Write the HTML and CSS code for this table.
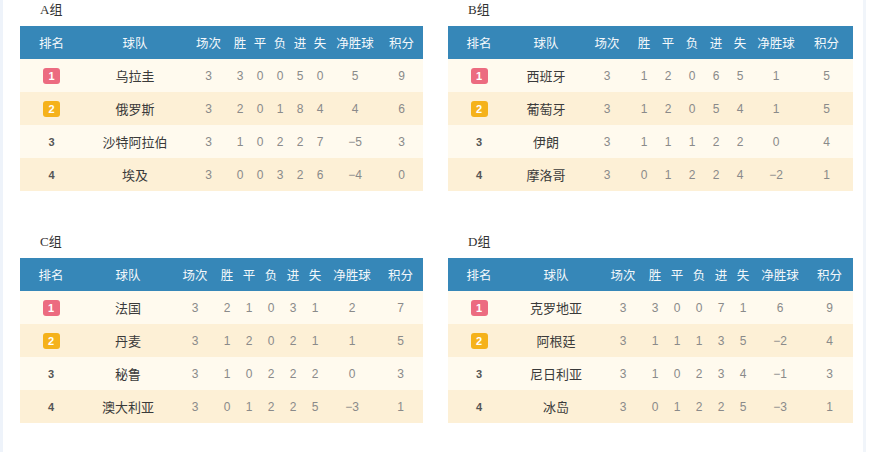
FILE: index.html
```html
<!DOCTYPE html>
<html lang="zh">
<head>
<meta charset="utf-8">
<title>小组积分</title>
<link rel="stylesheet" href="styles.css">
</head>
<body>
<div class="page">
  <div class="groups">
    <section class="group">
      <h3 class="group-title">A组</h3>
      <table class="standings ta">
        <colgroup><col class="c1"><col class="c2"><col class="c3"><col class="cs"><col class="cs"><col class="cs"><col class="cs"><col class="cs"><col class="c9"><col class="c10"></colgroup>
        <thead><tr><th>排名</th><th>球队</th><th>场次</th><th>胜</th><th>平</th><th>负</th><th>进</th><th>失</th><th>净胜球</th><th>积分</th></tr></thead>
        <tbody>
          <tr><td><span class="badge b1">1</span></td><td class="team">乌拉圭</td><td>3</td><td>3</td><td>0</td><td>0</td><td>5</td><td>0</td><td>5</td><td>9</td></tr>
          <tr><td><span class="badge b2">2</span></td><td class="team">俄罗斯</td><td>3</td><td>2</td><td>0</td><td>1</td><td>8</td><td>4</td><td>4</td><td>6</td></tr>
          <tr><td class="rank">3</td><td class="team">沙特阿拉伯</td><td>3</td><td>1</td><td>0</td><td>2</td><td>2</td><td>7</td><td>−5</td><td>3</td></tr>
          <tr><td class="rank">4</td><td class="team">埃及</td><td>3</td><td>0</td><td>0</td><td>3</td><td>2</td><td>6</td><td>−4</td><td>0</td></tr>
        </tbody>
      </table>
    </section>
    <section class="group">
      <h3 class="group-title">B组</h3>
      <table class="standings tb">
        <colgroup><col class="c1"><col class="c2"><col class="c3"><col class="cs"><col class="cs"><col class="cs"><col class="cs"><col class="cs"><col class="c9"><col class="c10"></colgroup>
        <thead><tr><th>排名</th><th>球队</th><th>场次</th><th>胜</th><th>平</th><th>负</th><th>进</th><th>失</th><th>净胜球</th><th>积分</th></tr></thead>
        <tbody>
          <tr><td><span class="badge b1">1</span></td><td class="team">西班牙</td><td>3</td><td>1</td><td>2</td><td>0</td><td>6</td><td>5</td><td>1</td><td>5</td></tr>
          <tr><td><span class="badge b2">2</span></td><td class="team">葡萄牙</td><td>3</td><td>1</td><td>2</td><td>0</td><td>5</td><td>4</td><td>1</td><td>5</td></tr>
          <tr><td class="rank">3</td><td class="team">伊朗</td><td>3</td><td>1</td><td>1</td><td>1</td><td>2</td><td>2</td><td>0</td><td>4</td></tr>
          <tr><td class="rank">4</td><td class="team">摩洛哥</td><td>3</td><td>0</td><td>1</td><td>2</td><td>2</td><td>4</td><td>−2</td><td>1</td></tr>
        </tbody>
      </table>
    </section>
    <section class="group">
      <h3 class="group-title">C组</h3>
      <table class="standings tc">
        <colgroup><col class="c1"><col class="c2"><col class="c3"><col class="cs"><col class="cs"><col class="cs"><col class="cs"><col class="cs"><col class="c9"><col class="c10"></colgroup>
        <thead><tr><th>排名</th><th>球队</th><th>场次</th><th>胜</th><th>平</th><th>负</th><th>进</th><th>失</th><th>净胜球</th><th>积分</th></tr></thead>
        <tbody>
          <tr><td><span class="badge b1">1</span></td><td class="team">法国</td><td>3</td><td>2</td><td>1</td><td>0</td><td>3</td><td>1</td><td>2</td><td>7</td></tr>
          <tr><td><span class="badge b2">2</span></td><td class="team">丹麦</td><td>3</td><td>1</td><td>2</td><td>0</td><td>2</td><td>1</td><td>1</td><td>5</td></tr>
          <tr><td class="rank">3</td><td class="team">秘鲁</td><td>3</td><td>1</td><td>0</td><td>2</td><td>2</td><td>2</td><td>0</td><td>3</td></tr>
          <tr><td class="rank">4</td><td class="team">澳大利亚</td><td>3</td><td>0</td><td>1</td><td>2</td><td>2</td><td>5</td><td>−3</td><td>1</td></tr>
        </tbody>
      </table>
    </section>
    <section class="group">
      <h3 class="group-title">D组</h3>
      <table class="standings td">
        <colgroup><col class="c1"><col class="c2"><col class="c3"><col class="cs"><col class="cs"><col class="cs"><col class="cs"><col class="cs"><col class="c9"><col class="c10"></colgroup>
        <thead><tr><th>排名</th><th>球队</th><th>场次</th><th>胜</th><th>平</th><th>负</th><th>进</th><th>失</th><th>净胜球</th><th>积分</th></tr></thead>
        <tbody>
          <tr><td><span class="badge b1">1</span></td><td class="team">克罗地亚</td><td>3</td><td>3</td><td>0</td><td>0</td><td>7</td><td>1</td><td>6</td><td>9</td></tr>
          <tr><td><span class="badge b2">2</span></td><td class="team">阿根廷</td><td>3</td><td>1</td><td>1</td><td>1</td><td>3</td><td>5</td><td>−2</td><td>4</td></tr>
          <tr><td class="rank">3</td><td class="team">尼日利亚</td><td>3</td><td>1</td><td>0</td><td>2</td><td>3</td><td>4</td><td>−1</td><td>3</td></tr>
          <tr><td class="rank">4</td><td class="team">冰岛</td><td>3</td><td>0</td><td>1</td><td>2</td><td>2</td><td>5</td><td>−3</td><td>1</td></tr>
        </tbody>
      </table>
    </section>
  </div>
</div>
</body>
</html>
```
FILE: styles.css
```css
html, body {
  margin: 0;
  padding: 0;
  background: #ffffff;
}

.page {
  width: 866px;
  height: 452px;
  box-sizing: border-box;
  border-left: 3px solid #eef3fa;
  border-right: 3px solid #f1f5fa;
  padding-left: 17px;
  font-family: "Noto Sans CJK SC", "Liberation Sans", sans-serif;
}

.groups {
  display: grid;
  grid-template-columns: 403px 405px;
  column-gap: 25px;
  row-gap: 41px;
}

.group-title {
  margin: 0;
  height: 26px;
  line-height: 20px;
  padding-left: 20px;
  font-family: "Liberation Serif", "Noto Sans CJK SC", serif;
  font-size: 13px;
  font-weight: normal;
  color: #333;
}

.standings {
  border-collapse: collapse;
  table-layout: fixed;
  width: 100%;
}

.standings th,
.standings td {
  padding: 0;
  height: 33px;
  text-align: center;
  vertical-align: middle;
  white-space: nowrap;
}

.standings th {
  background: #3687b8;
  color: #f4f8fb;
  font-weight: normal;
  font-size: 12.5px;
  font-family: "Noto Sans CJK SC", sans-serif;
}

.standings td {
  font-family: "Liberation Sans", "DejaVu Sans", sans-serif;
  font-size: 12px;
  color: #8a8a8a;
}

.standings tbody tr:nth-child(odd) td {
  background: #fffaee;
}

.standings tbody tr:nth-child(even) td {
  background: #fdf0d6;
}

.standings td.team {
  font-family: "Noto Sans CJK SC", sans-serif;
  font-size: 13px;
  color: #3a3a3a;
}

.standings td.rank {
  font-weight: bold;
  font-size: 11px;
  color: #555;
}

.badge {
  display: inline-block;
  width: 17px;
  height: 16px;
  line-height: 16px;
  border-radius: 3px;
  color: #fff;
  font-weight: bold;
  font-size: 11px;
  font-family: "Liberation Sans", sans-serif;
  vertical-align: middle;
}

.b1 { background: #ec6b80; }
.b2 { background: #f5b21b; }

/* column widths per table */
.ta .c1 { width: 63px; }
.ta .c2 { width: 104px; }
.ta .c3 { width: 43px; }
.ta .cs { width: 20px; }
.ta .c9 { width: 50px; }
.ta .c10 { width: 43px; }

.tb .c1 { width: 62px; }
.tb .c2 { width: 72px; }
.tb .c3 { width: 50px; }
.tb .cs { width: 24px; }
.tb .c9 { width: 48px; }
.tb .c10 { width: 53px; }

.tc .c1 { width: 62px; }
.tc .c2 { width: 92px; }
.tc .c3 { width: 42px; }
.tc .cs { width: 22px; }
.tc .c9 { width: 52px; }
.tc .c10 { width: 45px; }

.td .c1 { width: 62px; }
.td .c2 { width: 92px; }
.td .c3 { width: 42px; }
.td .cs { width: 22px; }
.td .c9 { width: 52px; }
.td .c10 { width: 47px; }
```
